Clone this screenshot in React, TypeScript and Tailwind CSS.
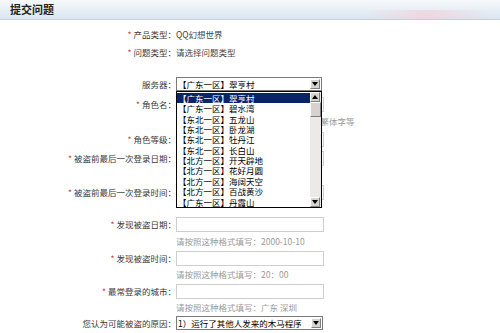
import type { ReactNode } from "react";

const servers = [
  "【广东一区】翠亨村",
  "【广东一区】碧水湾",
  "【东北一区】五龙山",
  "【东北一区】卧龙湖",
  "【东北一区】牡丹江",
  "【东北一区】长白山",
  "【北方一区】开天辟地",
  "【北方一区】花好月圆",
  "【北方一区】海阔天空",
  "【北方一区】百战黄沙",
  "【广东一区】丹霞山",
];

function Row({
  h,
  label,
  star,
  children,
}: {
  h: string;
  label?: string;
  star?: boolean;
  children?: ReactNode;
}) {
  return (
    <div className={`flex items-center ${h}`}>
      <div className="w-[176px] shrink-0 text-right text-[#3a3a3a]">
        {star && <span className="text-[#d04040] mr-[2px]">*</span>}
        {label}
      </div>
      <div className="flex items-center">{children}</div>
    </div>
  );
}

function Arrow({ up }: { up?: boolean }) {
  return (
    <div className="w-[10px] h-[10px] bg-[#d6d3ce] border border-t-white border-l-white border-r-[#808080] border-b-[#808080] flex items-center justify-center">
      <svg width="6" height="4" viewBox="0 0 6 4">
        <path d={up ? "M0 4 L3 0 L6 4 Z" : "M0 0 L6 0 L3 4 Z"} fill="#000" />
      </svg>
    </div>
  );
}

function Select({ value, w }: { value: string; w: string }) {
  return (
    <div className={`h-[14px] ${w} border border-[#7a7a7a] bg-white flex items-center justify-between pl-[1px] pr-[1px]`}>
      <span className="text-black leading-none">{value}</span>
      <Arrow />
    </div>
  );
}

function Input() {
  return <div className="w-[148px] h-[15px] border border-[#cfcfcf] bg-white" />;
}

function Hint({ children }: { children: ReactNode }) {
  return <span className="text-[#9a9a9a]">{children}</span>;
}

export default function App() {
  return (
    <div className="w-[500px] h-[333px] overflow-hidden bg-white text-[8.5px] leading-none font-['Noto_Sans_CJK_SC','Noto_Sans',sans-serif]">
      <div className="h-[20px] flex items-center justify-between pl-[10px] border-b border-[#c3d1dc] bg-gradient-to-b from-[#f6f9fc] to-[#dae6f0]">
        <span className="text-[11px] font-bold text-[#222]">提交问题</span>
        <div className="self-end w-[130px] h-[9px] mr-[8px] bg-gradient-to-r from-transparent via-[#f1d3dc] to-transparent opacity-80" />
      </div>

      <div className="h-[5px]" />
      <Row h="h-[18px]" label="产品类型：" star>
        <span className="text-[#444]">QQ幻想世界</span>
      </Row>
      <Row h="h-[18px]" label="问题类型：" star>
        <span className="text-[#444]">请选择问题类型</span>
      </Row>
      <div className="h-[14px]" />
      <Row h="h-[18px]" label="服务器：">
        <div className="relative">
          <Select value="【广东一区】翠亨村" w="w-[146px]" />
          <div className="absolute left-0 top-[14px] z-10 w-[146px] h-[117px] border border-black bg-white flex">
            <div className="flex-1 flex flex-col pt-[1px]">
              {servers.map((s, i) => (
                <div
                  key={s}
                  className={`h-[10.5px] flex items-center pl-[1px] ${i === 0 ? "bg-[#0a246a] text-white" : "text-black"}`}
                >
                  {s}
                </div>
              ))}
            </div>
            <div className="w-[11px] flex flex-col bg-[#ebeae6]">
              <Arrow up />
              <div className="h-[15px] bg-[#d6d3ce] border border-t-white border-l-white border-r-[#808080] border-b-[#808080]" />
              <div className="flex-1" />
              <Arrow />
            </div>
          </div>
        </div>
      </Row>
      <Row h="h-[22px]" label="角色名：" star>
        <Input />
      </Row>
      <Row h="h-[12px]">
        <Hint>请输入正确的角色名，不要含有空格、繁体字等</Hint>
      </Row>
      <Row h="h-[24px]" label="角色等级：" star>
        <Input />
      </Row>
      <Row h="h-[14px]" label="被盗前最后一次登录日期：" star>
        <Input />
      </Row>
      <div className="h-[18px]" />
      <Row h="h-[18px]" label="被盗前最后一次登录时间：" star>
        <Input />
      </Row>
      <div className="h-[15px]" />
      <Row h="h-[17px]" label="发现被盗日期：" star>
        <Input />
      </Row>
      <Row h="h-[16px]">
        <Hint>请按照这种格式填写：2000-10-10</Hint>
      </Row>
      <Row h="h-[18px]" label="发现被盗时间：" star>
        <Input />
      </Row>
      <Row h="h-[14px]">
        <Hint>请按照这种格式填写：20：00</Hint>
      </Row>
      <Row h="h-[21px]" label="最常登录的城市：" star>
        <Input />
      </Row>
      <Row h="h-[10px]">
        <Hint>请按照这种格式填写：广东 深圳</Hint>
      </Row>
      <Row h="h-[22px]" label="您认为可能被盗的原因：">
        <Select value="1）运行了其他人发来的木马程序" w="w-[147px]" />
      </Row>
    </div>
  );
}
